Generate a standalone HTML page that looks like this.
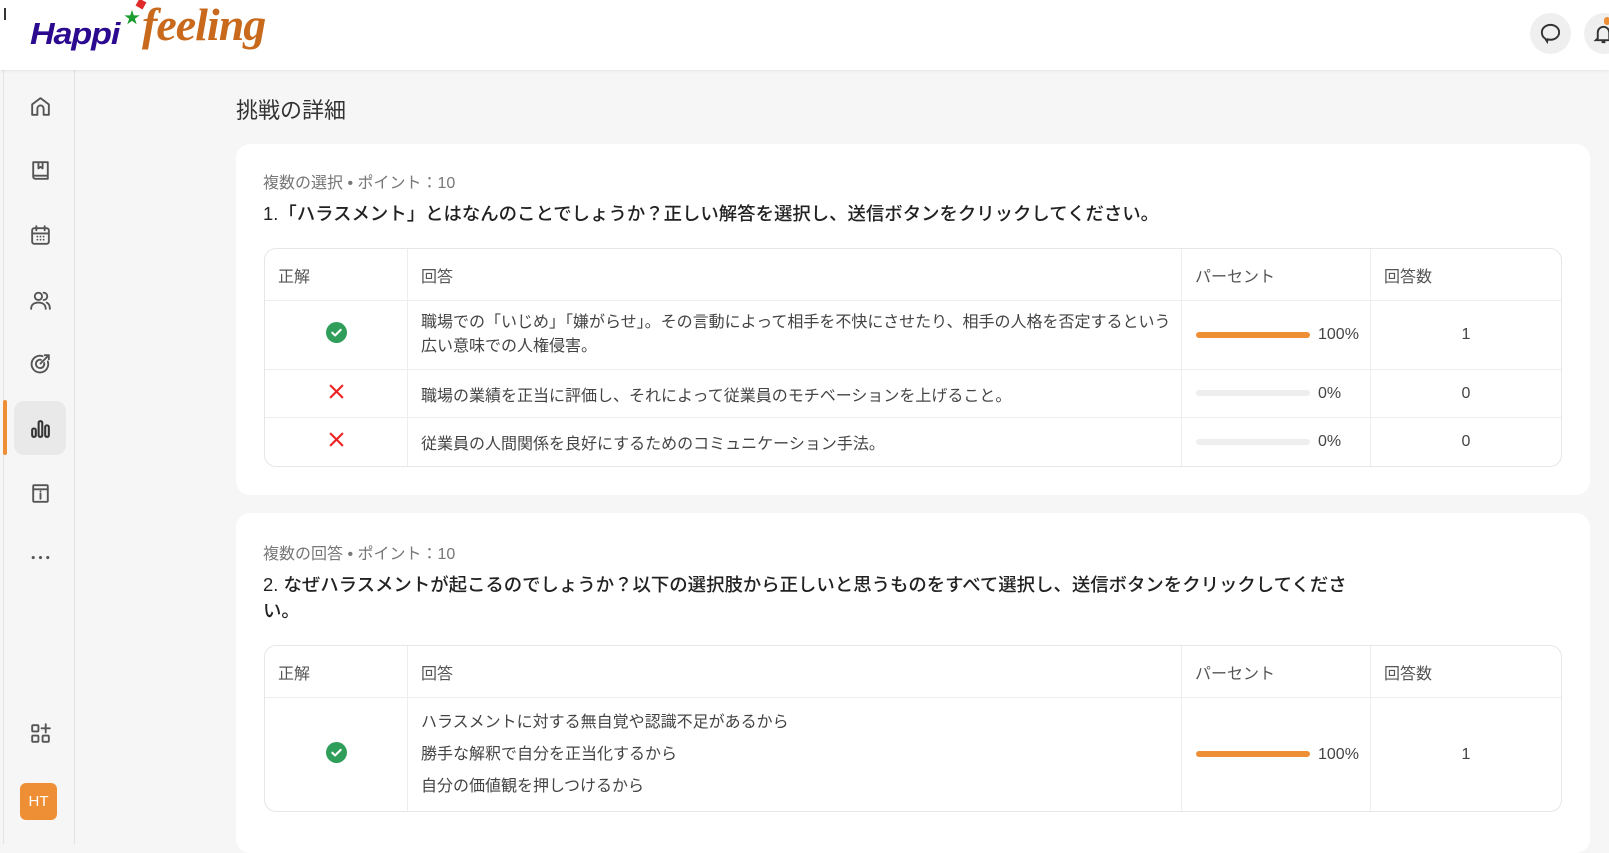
<!DOCTYPE html>
<html><head><meta charset="utf-8"><style>
*{box-sizing:border-box;margin:0;padding:0}
body{width:1609px;height:844px;overflow:hidden;background:#f6f6f6;font-family:"Liberation Sans","Noto Sans CJK JP",sans-serif;color:#333;position:relative}
.hdr{position:absolute;left:0;top:0;width:1609px;height:70px;background:#fff;box-shadow:0 1px 3px rgba(0,0,0,.08);z-index:2}
.side{position:absolute;left:3px;top:70px;width:72px;height:774px;background:#f6f6f6;border-right:1px solid #e3e3e3;border-left:1px solid #e3e3e3}
.ic{position:absolute;left:15px;width:42px;height:42px;display:flex;align-items:center;justify-content:center}
.ic svg{width:25px;height:25px;fill:none;stroke:#555;stroke-width:1.8;stroke-linecap:round;stroke-linejoin:round}
.act{background:#e9e9e9;border-radius:10px;width:52px;height:54px;left:10px}
.bar{position:absolute;left:-1px;width:4px;background:#ef8f35;border-radius:2px}
.title{position:absolute;left:236px;top:93px;font-size:22px;color:#333}
.card{position:absolute;left:236px;width:1354px;background:#fff;border-radius:14px}
.meta{position:absolute;left:27px;font-size:16px;color:#777}
.q{position:absolute;left:27px;font-size:18.4px;color:#222;line-height:26px;width:1100px;font-weight:500}
table{position:absolute;left:28px;width:1298px;border-collapse:separate;border-spacing:0;border:1.5px solid #e6e6e6;border-radius:12px;font-size:16px;color:#444}
td,th{border-right:1.5px solid #eee;border-bottom:1.5px solid #eee;font-weight:normal;text-align:left;vertical-align:middle}
th{color:#555;padding-left:13px}
td:last-child,th:last-child{border-right:none}
tr:last-child td{border-bottom:none}
.c1{width:142px;text-align:center}
.c3{width:189px}
.pb{display:inline-block;width:114px;height:6px;border-radius:3px;background:#eee;vertical-align:middle;margin-left:14px;margin-right:8px}
.pb.f{background:#ef8f35}
.n{text-align:center}
</style></head><body>
<div class="hdr">
<div style="position:absolute;left:4px;top:8px;width:2px;height:12px;background:#333"></div>
<div style="position:absolute;left:30px;top:16px;font:italic 900 31px 'Liberation Sans',sans-serif;color:#2b0a8f;letter-spacing:-1px;transform:scaleX(1.1);transform-origin:left">Happi</div>
<div style="position:absolute;left:124px;top:4px;color:#1a9c2e;font-size:16px">★</div>
<div style="position:absolute;left:137px;top:0;width:8px;height:8px;background:#e02a2a;transform:rotate(30deg)"></div>
<div style="position:absolute;left:142px;top:-2px;font:italic bold 46px 'Liberation Serif',serif;color:#c8691c;letter-spacing:-1px">feeling</div>
<div style="position:absolute;left:1530px;top:13px;width:41px;height:41px;border-radius:50%;background:#efefef"></div>
<svg style="position:absolute;left:1539px;top:22px" width="23" height="23" viewBox="0 0 24 24" fill="none" stroke="#333" stroke-width="2"><path d="M12 3c5 0 9 3.4 9 7.8 0 4.3-4 7.7-9 7.7-1 0-2-.1-3-.4l-.5 2.4-2-3.2C4.2 16 3 13.6 3 10.8 3 6.4 7 3 12 3z"/></svg>
<div style="position:absolute;left:1584px;top:13px;width:41px;height:41px;border-radius:50%;background:#efefef"></div>
<svg style="position:absolute;left:1592px;top:22px" width="23" height="23" viewBox="0 0 24 24" fill="none" stroke="#333" stroke-width="2"><path d="M6 17V11a6 6 0 0112 0v6l2 2H4l2-2zM10 21h4"/></svg>
<div style="position:absolute;left:1604px;top:17px;width:6px;height:8px;border-radius:3px;background:#ef8f35"></div>
</div>
<div class="side">
<div class="ic" style="top:15px"><svg viewBox="0 0 24 24"><path d="M4 20V10l8-6 8 6v10h-5v-6a3 3 0 00-6 0v6z"/></svg></div>
<div class="ic" style="top:79px"><svg viewBox="0 0 24 24"><path d="M5 4h14v16H7a2 2 0 01-2-2zM5 17h14M10 4v6l2-1.5 2 1.5V4"/></svg></div>
<div class="ic" style="top:144px"><svg viewBox="0 0 24 24"><rect x="4" y="5" width="16" height="15" rx="2"/><path d="M4 10h16M8 3v4M16 3v4M9 13h.01M12 13h.01M15 13h.01M9 16h.01M12 16h.01M15 16h.01"/></svg></div>
<div class="ic" style="top:209px"><svg viewBox="0 0 24 24"><circle cx="10" cy="8" r="3.5"/><path d="M3 20c0-4 3-6 7-6s7 2 7 6M15 4.5a3.5 3.5 0 010 7M18 14c2 1 3 3 3 6"/></svg></div>
<div class="ic" style="top:272px"><svg viewBox="0 0 24 24"><path d="M19 10a8 8 0 11-5-5M15.5 11.5a4 4 0 11-3-3M12 12l8-8M16 4h4v4"/></svg></div>
<div class="bar" style="top:330px;height:55px"></div>
<div class="ic act" style="top:331px"><svg viewBox="0 0 24 24" style="stroke:#333;stroke-width:2"><rect x="4" y="12" width="3.5" height="8" rx="1.5"/><rect x="10.2" y="5" width="3.5" height="15" rx="1.5"/><rect x="16.5" y="9" width="3.5" height="11" rx="1.5"/></svg></div>
<div class="ic" style="top:402px"><svg viewBox="0 0 24 24"><rect x="5" y="4" width="14" height="16" rx="1"/><path d="M5 8h14M12 12v5M12 10h.01"/></svg></div>
<div class="ic" style="top:466px"><svg viewBox="0 0 24 24" style="stroke-width:3"><path d="M5 12h.01M12 12h.01M19 12h.01"/></svg></div>
<div class="ic" style="top:642px"><svg viewBox="0 0 24 24"><rect x="4" y="4" width="6" height="6" rx="1"/><rect x="4" y="14" width="6" height="6" rx="1"/><rect x="14" y="14" width="6" height="6" rx="1"/><path d="M17 3v8M13 7h8"/></svg></div>
<div style="position:absolute;left:16px;top:713px;width:37px;height:37px;border-radius:6px;background:#ef8f35;color:#fff;font-size:15px;display:flex;align-items:center;justify-content:center">HT</div>
</div>
<div class="title">挑戦の詳細</div>

<div class="card" style="top:144px;height:351px">
<div class="meta" style="top:25px">複数の選択 • ポイント：10</div>
<div class="q" style="top:57px;width:1200px">1.「ハラスメント」とはなんのことでしょうか？正しい解答を選択し、送信ボタンをクリックしてください。</div>
<table style="top:104px;height:219px">
<tr style="height:52px"><th style="width:143px">正解</th><th>回答</th><th class="c3">パーセント</th><th style="width:190px">回答数</th></tr>
<tr style="height:69px"><td class="c1"><svg width="21" height="21" viewBox="0 0 20 20"><circle cx="10" cy="10" r="10" fill="#2f9e5b"/><path d="M6 10.2l2.6 2.6L14 7.5" fill="none" stroke="#fff" stroke-width="2" stroke-linecap="round" stroke-linejoin="round"/></svg></td><td style="padding-left:13px;line-height:24px">職場での「いじめ」「嫌がらせ」。その言動によって相手を不快にさせたり、相手の人格を否定するという<br>広い意味での人権侵害。</td><td><span class="pb f"></span>100%</td><td class="n">1</td></tr>
<tr style="height:48px"><td class="c1"><svg width="17" height="17" viewBox="0 0 16 16"><path d="M2 2l12 12M14 2L2 14" stroke="#e22" stroke-width="2"/></svg></td><td style="padding-left:13px">職場の業績を正当に評価し、それによって従業員のモチベーションを上げること。</td><td><span class="pb"></span>0%</td><td class="n">0</td></tr>
<tr style="height:48px"><td class="c1"><svg width="17" height="17" viewBox="0 0 16 16"><path d="M2 2l12 12M14 2L2 14" stroke="#e22" stroke-width="2"/></svg></td><td style="padding-left:13px">従業員の人間関係を良好にするためのコミュニケーション手法。</td><td><span class="pb"></span>0%</td><td class="n">0</td></tr>
</table>
</div>

<div class="card" style="top:513px;height:340px">
<div class="meta" style="top:27px">複数の回答 • ポイント：10</div>
<div class="q" style="top:59px;width:1095px">2. なぜハラスメントが起こるのでしょうか？以下の選択肢から正しいと思うものをすべて選択し、送信ボタンをクリックしてください。</div>
<table style="top:132px;height:165px">
<tr style="height:52px"><th style="width:143px">正解</th><th>回答</th><th class="c3">パーセント</th><th style="width:190px">回答数</th></tr>
<tr style="height:113px"><td class="c1"><svg width="21" height="21" viewBox="0 0 20 20"><circle cx="10" cy="10" r="10" fill="#2f9e5b"/><path d="M6 10.2l2.6 2.6L14 7.5" fill="none" stroke="#fff" stroke-width="2" stroke-linecap="round" stroke-linejoin="round"/></svg></td><td style="padding-left:13px;line-height:32px">ハラスメントに対する無自覚や認識不足があるから<br>勝手な解釈で自分を正当化するから<br>自分の価値観を押しつけるから</td><td><span class="pb f"></span>100%</td><td class="n">1</td></tr>
</table>
</div>
</body></html>
